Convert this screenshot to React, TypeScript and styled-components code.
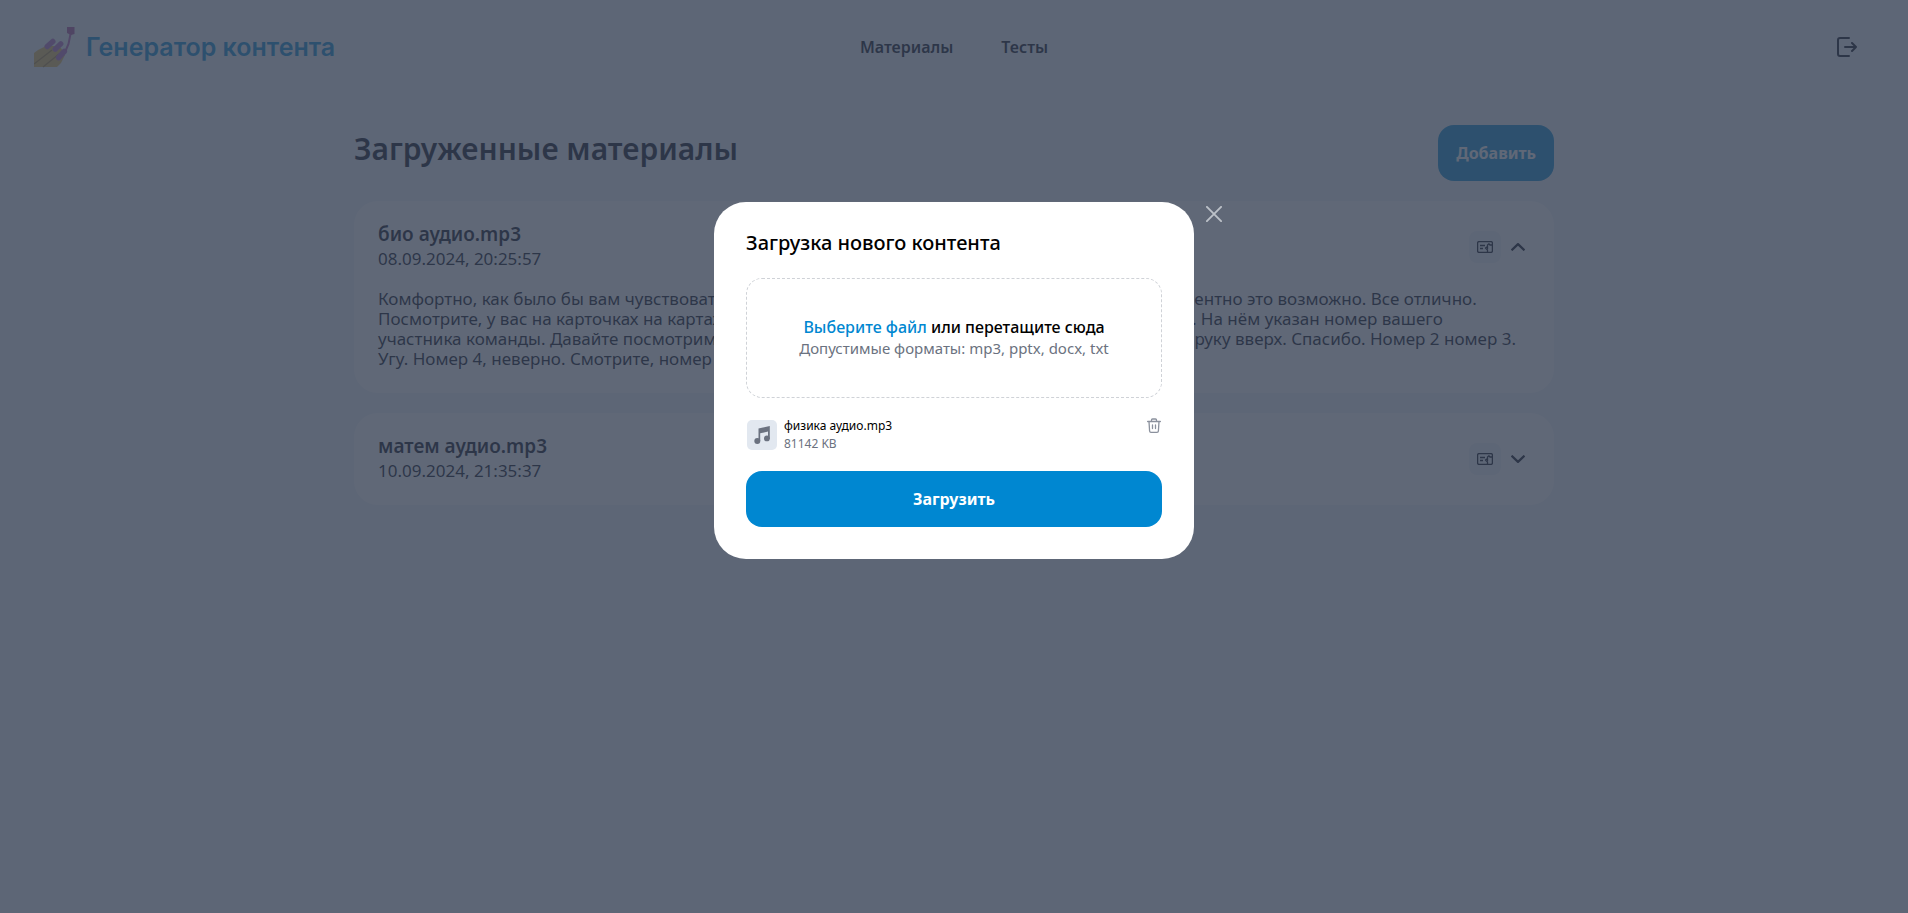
import React from "react";
import styled, { createGlobalStyle } from "styled-components";

const GlobalStyle = createGlobalStyle`
  * { box-sizing: border-box; }
  body {
    margin: 0;
    background: #f0f4f8;
    color: #020617;
    font-family: "Noto Sans", "Open Sans", sans-serif;
    font-size: 16px;
    line-height: 24px;
  }
  h1, h2, h3, p { margin: 0; }
  button { font-family: inherit; cursor: pointer; }
`;

const Header = styled.header`
  display: grid;
  grid-template-columns: 1fr auto 1fr;
  align-items: center;
  height: 94px;
  padding: 0 34px;
`;

const Brand = styled.a`
  display: flex;
  align-items: center;
  gap: 10px;
  color: #0087d1;
  font-family: Inter, sans-serif;
  font-size: 25px;
  font-weight: 600;
  line-height: 32px;
  text-decoration: none;
`;

const Nav = styled.nav`
  display: flex;
  gap: 48px;
`;

const NavLink = styled.a`
  color: inherit;
  font-weight: 600;
  text-decoration: none;
`;

const IconButton = styled.button<{ $size: number; $filled?: boolean }>`
  display: grid;
  place-items: center;
  width: ${(p) => p.$size}px;
  height: ${(p) => p.$size}px;
  padding: 0;
  border: 0;
  border-radius: 8px;
  background: ${(p) => (p.$filled ? "#f0f4f8" : "transparent")};
  color: inherit;
`;

const HeaderEnd = styled.div`
  display: flex;
  justify-content: flex-end;
  padding-right: 13px;
`;

const Main = styled.main`
  max-width: 1200px;
  margin: 0 auto;
  padding: 31px 0 40px;
`;

const TitleRow = styled.div`
  display: flex;
  justify-content: space-between;
  margin-bottom: 20px;
`;

const PageTitle = styled.h1`
  font-size: 30px;
  font-weight: 600;
  line-height: 48px;
`;

const PrimaryButton = styled.button<{ $wide?: boolean }>`
  width: ${(p) => (p.$wide ? "100%" : "auto")};
  height: 56px;
  padding: 0 18px;
  border: 0;
  border-radius: 16px;
  background: #0087d1;
  color: #fff;
  font-size: 16px;
  font-weight: 700;
`;

const Materials = styled.div`
  display: flex;
  flex-direction: column;
  gap: 20px;
`;

const Card = styled.article`
  padding: 20px 24px;
  border-radius: 24px;
  background: #fff;
`;

const CardHead = styled.div`
  display: flex;
  align-items: center;
  justify-content: space-between;
`;

const CardInfo = styled.div`
  padding-bottom: 2px;
`;

const CardTitle = styled.h2`
  font-size: 19px;
  font-weight: 600;
  line-height: 26px;
`;

const CardDate = styled.p`
  font-size: 17px;
`;

const CardActions = styled.div`
  display: flex;
  align-items: center;
  gap: 5px;
`;

const Transcript = styled.p`
  padding: 16px 0 4px;
  font-size: 17px;
  line-height: 20px;
  white-space: pre-line;
`;

const Overlay = styled.div`
  position: fixed;
  inset: 0;
  display: flex;
  justify-content: center;
  align-items: flex-start;
  padding-top: 202px;
  background: rgba(56, 66, 85, 0.8);
`;

const Dialog = styled.section`
  position: relative;
  width: 480px;
  padding: 28px 32px 32px;
  border-radius: 32px;
  background: #fff;
  color: #000;
`;

const CloseButton = styled(IconButton)`
  position: absolute;
  top: 0;
  left: 100%;
  margin-left: 8px;
  color: #bcc1c8;
`;

const DialogTitle = styled.h2`
  margin-bottom: 22px;
  font-size: 20px;
  font-weight: 500;
  line-height: 26px;
`;

const DropZone = styled.label`
  display: flex;
  flex-direction: column;
  align-items: center;
  justify-content: center;
  height: 120px;
  padding-bottom: 2px;
  border: 1px dashed #cfd2d7;
  border-radius: 16px;
  font-weight: 500;
  line-height: 22px;
  cursor: pointer;
`;

const HiddenInput = styled.input`
  position: absolute;
  width: 1px;
  height: 1px;
  opacity: 0;
`;

const Accent = styled.span`
  color: #0087d1;
`;

const Hint = styled.span`
  color: #6b7280;
  font-size: 15px;
  font-weight: 400;
  line-height: 20px;
`;

const FileRow = styled.div`
  display: flex;
  align-items: flex-start;
  gap: 7px;
  padding: 19px 0 18px;
`;

const FileBadge = styled.div`
  display: grid;
  place-items: center;
  width: 30px;
  height: 30px;
  margin: 3px 0 0 1px;
  border-radius: 5px;
  background: #e2e8f0;
`;

const FileInfo = styled.div`
  flex: 1;
  font-size: 12px;
  line-height: 18px;
`;

const FileSize = styled.p`
  color: #6b7280;
`;

const DeleteButton = styled(IconButton)`
  color: #8b919d;
`;

const NailPolish = () => (
  <svg width="42" height="42" viewBox="0 0 42 42" aria-hidden="true">
    <path d="M0 27 4 24 12 20 20 20 27 22 31 29 27 37 23 41H0Z" fill="#dfb958" />
    <path d="M0 38 18 24M9 41 25 28" stroke="#a98238" strokeWidth="1.3" fill="none" />
    <g fill="#b36cc4">
      <rect x="-6.500" y="-2.700" width="13" height="5.400" rx="2.700" transform="translate(16 18) rotate(-42)" />
      <rect x="-6.500" y="-2.700" width="13" height="5.400" rx="2.700" transform="translate(24 20.500) rotate(-44)" />
      <rect x="-7" y="-2.800" width="14" height="5.600" rx="2.800" transform="translate(27.500 28.500) rotate(-48)" />
    </g>
    <path d="M36.500 8 34.500 18 31.500 25" stroke="#b95fb4" strokeWidth="2" fill="none" />
    <path d="M33 1H40.500V8L37 9 33 7Z" fill="#a8509c" />
  </svg>
);

const LogoutIcon = () => (
  <svg width="20" height="20" viewBox="0 0 20 20" fill="none" stroke="currentColor" strokeWidth="2" strokeLinecap="round" strokeLinejoin="round" aria-hidden="true">
    <path d="M12 1H3Q1 1 1 3V17Q1 19 3 19H12M8 10H19M15 6 19 10 15 14" />
  </svg>
);

const TestIcon = () => (
  <svg width="16" height="12" viewBox="0 0 16 12" fill="none" stroke="currentColor" strokeWidth="1.3" strokeLinejoin="round" aria-hidden="true">
    <path d="M10 11.400H2Q.6 11.400.6 10V2Q.6.6 2 .6H14Q15.400.6 15.400 2V10Q15.400 11.400 14 11.400H10" />
    <path d="M3 4.500H8M3 7.500H6M10.500 11V9L8.500 7 10.500 5.500V4L12 2.800 13 4H15M10.500 5.500V8" />
  </svg>
);

const Chevron = ({ up = false }: { up?: boolean }) => (
  <svg width="14" height="8" viewBox="0 0 14 8" fill="none" stroke="currentColor" strokeWidth="2.300" strokeLinejoin="round" aria-hidden="true">
    <path d={up ? "M.5 7.300 7 1.200 13.500 7.300" : "M.5.7 7 6.800 13.500.7"} />
  </svg>
);

const CloseIcon = () => (
  <svg width="16" height="16" viewBox="0 0 16 16" stroke="currentColor" strokeWidth="1.900" strokeLinecap="round" aria-hidden="true">
    <path d="M.9.9 15.100 15.100M15.100.9.9 15.100" />
  </svg>
);

const MusicIcon = () => (
  <svg width="16" height="18" viewBox="0 0 16 18" fill="#6b7280" aria-hidden="true">
    <path d="M4.500 2.500 15.800 0V13H14V5.500L6.200 7.300V15H4.500Z" />
    <circle cx="3.300" cy="15" r="3" />
    <circle cx="12.900" cy="12.400" r="2.900" />
  </svg>
);

const TrashIcon = () => (
  <svg width="14" height="15" viewBox="0 0 14 15" fill="none" stroke="currentColor" strokeWidth="1.300" strokeLinecap="round" strokeLinejoin="round" aria-hidden="true">
    <path d="M.6 3.500H13.400M4.500 3.500V2Q4.500 1 5.500 1H8.500Q9.500 1 9.500 2V3.500M2 3.500 2.600 13Q2.700 14.300 4 14.300H10Q11.300 14.300 11.400 13L12 3.500M5.500 7V10.500M8.500 7V10.500" />
  </svg>
);

const transcript = `Комфортно, как было бы вам чувствовать себя в этой группе сегодня вместе? Насколько одномоментно это возможно. Все отлично.
Посмотрите, у вас на карточках на картах лежит для каждого участника свой отдельный документ. На нём указан номер вашего
участника команды. Давайте посмотрим, кто у нас будет первый отвечать на вопрос, а потом все, руку вверх. Спасибо. Номер 2 номер 3.
Угу. Номер 4, неверно. Смотрите, номер`;

const materials = [
  { name: "био аудио.mp3", date: "08.09.2024, 20:25:57", text: transcript },
  { name: "матем аудио.mp3", date: "10.09.2024, 21:35:37" },
];

export default function App() {
  return (
    <>
      <GlobalStyle />
      <Header>
        <Brand href="#">
          <NailPolish />
          Генератор контента
        </Brand>
        <Nav>
          <NavLink href="#materials">Материалы</NavLink>
          <NavLink href="#tests">Тесты</NavLink>
        </Nav>
        <HeaderEnd>
          <IconButton $size={28} aria-label="Выйти"><LogoutIcon /></IconButton>
        </HeaderEnd>
      </Header>
      <Main>
        <TitleRow>
          <PageTitle>Загруженные материалы</PageTitle>
          <PrimaryButton>Добавить</PrimaryButton>
        </TitleRow>
        <Materials>
          {materials.map((m) => (
            <Card key={m.name}>
              <CardHead>
                <CardInfo>
                  <CardTitle>{m.name}</CardTitle>
                  <CardDate>{m.date}</CardDate>
                </CardInfo>
                <CardActions>
                  <IconButton $size={32} $filled aria-label="Тест"><TestIcon /></IconButton>
                  <IconButton $size={24} aria-label={m.text ? "Свернуть" : "Развернуть"}><Chevron up={!!m.text} /></IconButton>
                </CardActions>
              </CardHead>
              {m.text && <Transcript>{m.text}</Transcript>}
            </Card>
          ))}
        </Materials>
      </Main>
      <Overlay>
        <Dialog role="dialog" aria-modal="true" aria-labelledby="upload-title">
          <CloseButton $size={24} aria-label="Закрыть"><CloseIcon /></CloseButton>
          <DialogTitle id="upload-title">Загрузка нового контента</DialogTitle>
          <DropZone htmlFor="upload-file">
            <HiddenInput id="upload-file" type="file" accept=".mp3,.pptx,.docx,.txt" />
            <span><Accent>Выберите файл</Accent> или перетащите сюда</span>
            <Hint>Допустимые форматы: mp3, pptx, docx, txt</Hint>
          </DropZone>
          <FileRow>
            <FileBadge><MusicIcon /></FileBadge>
            <FileInfo>
              <p>физика аудио.mp3</p>
              <FileSize>81142 KB</FileSize>
            </FileInfo>
            <DeleteButton $size={16} aria-label="Удалить"><TrashIcon /></DeleteButton>
          </FileRow>
          <PrimaryButton $wide>Загрузить</PrimaryButton>
        </Dialog>
      </Overlay>
    </>
  );
}
